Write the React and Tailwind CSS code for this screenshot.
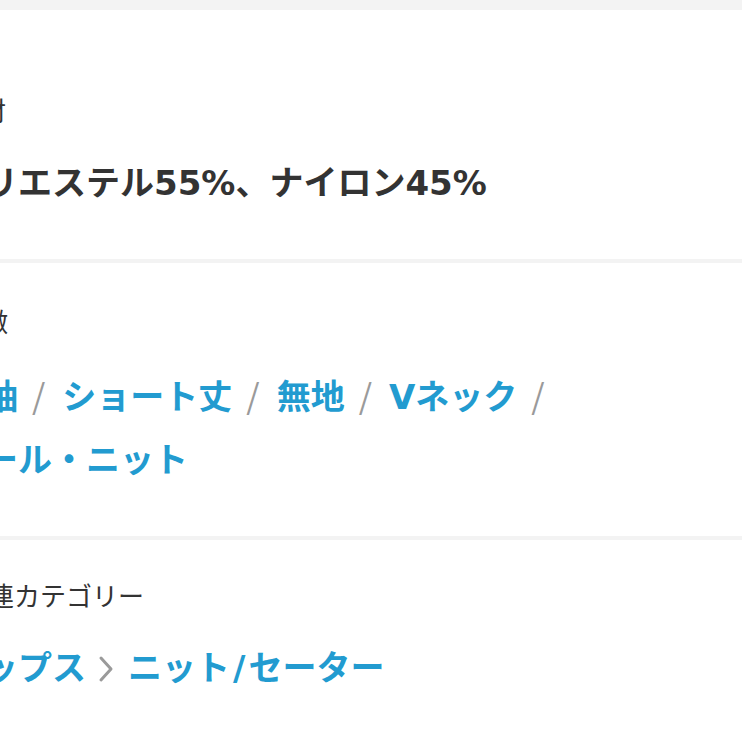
import React from "react";

const font = { fontFamily: '"Noto Sans CJK JP", "Noto Sans", sans-serif' };
const valueFont = { fontFamily: '"DejaVu Sans", "Noto Sans CJK JP", sans-serif' };

export default function App() {
  const tags = ["長袖", "ショート丈", "無地", "Vネック", "ウール・ニット"];
  return (
    <div className="w-[742px] h-[742px] overflow-hidden bg-[#f3f3f3]" style={font}>
      <div className="mt-[10px] bg-white pt-[80px] pb-[44px]">
        <div className="ml-[-50px]">
          <div className="ml-[4px] text-[26px] leading-[40px] text-[#333]">素材</div>
          <div
            className="mt-[22px] text-[34px] leading-[63px] font-semibold text-[#333] whitespace-nowrap"
            style={valueFont}
          >
            ポリエステル55%、ナイロン45%
          </div>
        </div>
      </div>
      <div className="mt-[4px] bg-white pt-[38px] pb-[44px]">
        <div className="ml-[-50px] w-[640px]">
          <div className="ml-[6px] text-[26px] leading-[40px] text-[#333]">特徴</div>
          <div
            className="mt-[22px] flex flex-wrap text-[34px] leading-[63px] font-semibold text-[#229bd0]"
            style={valueFont}
          >
            {tags.map((t, i) => (
              <span key={t} className="whitespace-nowrap">
                {t}
                {i < tags.length - 1 && (
                  <span className="ml-[14px] mr-[17px] font-normal text-[#9a9a9a]" style={font}>
                    /
                  </span>
                )}
              </span>
            ))}
          </div>
        </div>
      </div>
      <div className="mt-[4px] bg-white pt-[35px] pb-[44px]">
        <div className="ml-[-50px]">
          <div className="ml-[12px] text-[26px] leading-[40px] text-[#333]">関連カテゴリー</div>
          <div
            className="mt-[22px] flex items-center text-[34px] leading-[63px] font-semibold text-[#229bd0] whitespace-nowrap"
            style={valueFont}
          >
            <span>トップス</span>
            <svg width="16" height="28" viewBox="0 0 16 28" className="ml-[12px] mr-[14px]" fill="none">
              <path d="M3 3 L13 14 L3 25" stroke="#9a9a9a" strokeWidth="3" strokeLinecap="round" strokeLinejoin="round" />
            </svg>
            <span>
              ニット<span className="mx-[3px]">/</span>セーター
            </span>
          </div>
        </div>
      </div>
    </div>
  );
}
